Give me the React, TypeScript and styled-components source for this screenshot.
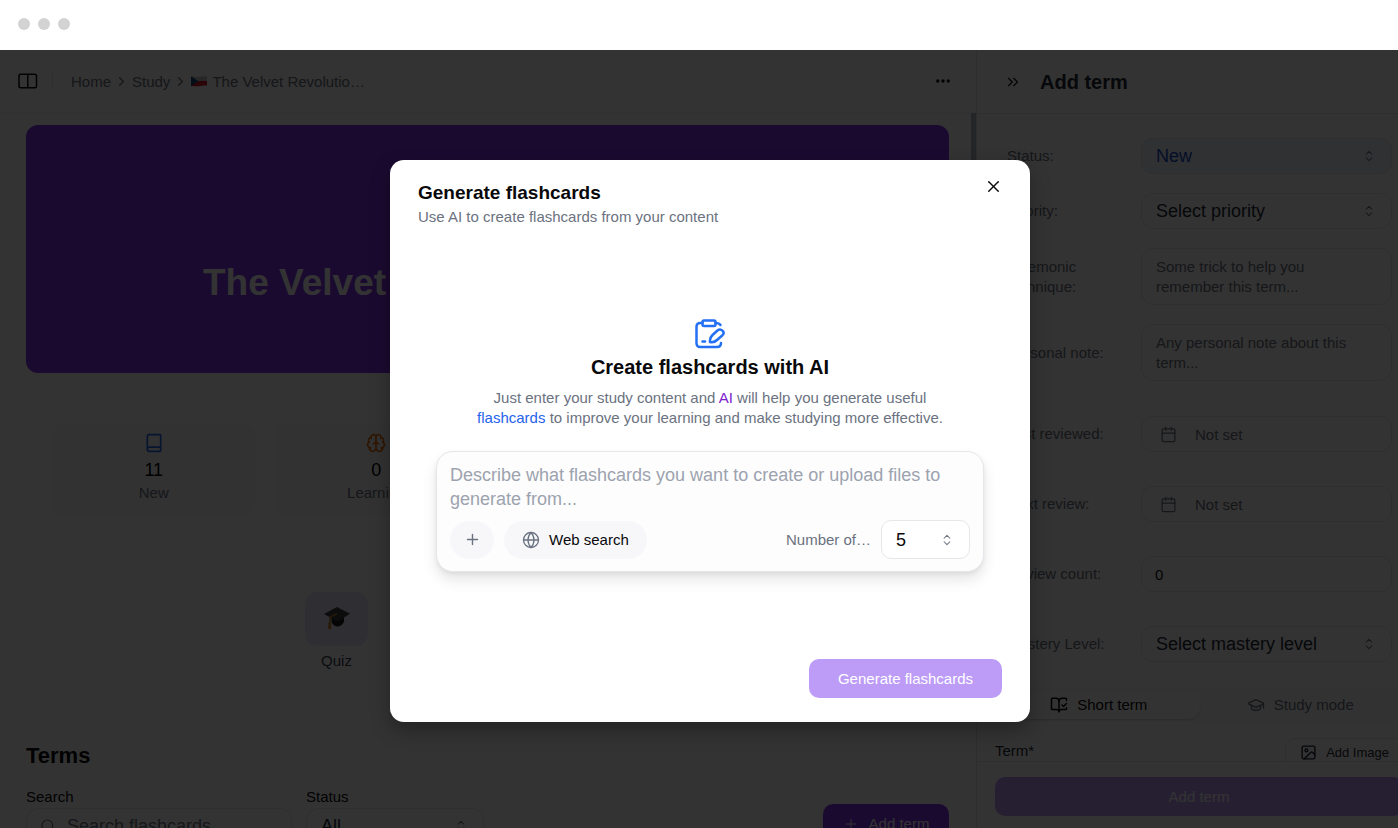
import React from "react";
import styled, { createGlobalStyle, css } from "styled-components";
import {
  Book,
  BookOpenCheck,
  Brain,
  Calendar,
  ChevronRight,
  ChevronsRight,
  ChevronsUpDown,
  Ellipsis,
  Globe,
  GraduationCap,
  Image as ImageIcon,
  Plus,
  Search,
  X,
} from "lucide-react";

const GlobalStyle = createGlobalStyle`
  *, *::before, *::after { box-sizing: border-box; }
  body { margin: 0; background: #fff; }
  body, button, input, select, textarea {
    font-family: "Liberation Sans", Arial, Helvetica, sans-serif;
  }
  h1, h2, h3, p { margin: 0; }
  button { cursor: pointer; }
`;

const ink = "#0a0a0c";
const muted = "#6b7280";
const line = "#e5e7eb";
const violet = "#8534ee";

const Page = styled.div`
  height: 100vh;
  display: flex;
  flex-direction: column;
  overflow: hidden;
`;

const WindowBar = styled.header`
  flex: none;
  height: 50px;
  padding: 0 18px 2px;
  display: flex;
  align-items: center;
  gap: 8px;
  background: #fff;
`;

const WindowDot = styled.span`
  width: 12px;
  height: 12px;
  border-radius: 50%;
  background: #d3d3d3;
`;

/* The shell runs a little past the window's right edge, where it is clipped. */
const Shell = styled.div`
  position: relative;
  flex: 1;
  min-height: 0;
  width: calc(100% + 25px);
  display: flex;
  overflow: hidden;
`;

const Main = styled.main`
  flex: 1;
  min-width: 0;
  display: flex;
  flex-direction: column;
  overflow: hidden;
`;

const TopBar = styled.div`
  flex: none;
  height: 63px;
  padding: 0 24px 0 18px;
  display: flex;
  align-items: center;
  border-bottom: 1px solid #f3f4f6;
`;

const IconButton = styled.button`
  display: inline-flex;
  align-items: center;
  justify-content: center;
  padding: 0;
  border: 0;
  background: none;
  color: ${ink};
`;

const Separator = styled.span`
  width: 1px;
  height: 16px;
  margin: 0 18px 0 14px;
  background: ${line};
`;

const Crumbs = styled.nav`
  display: flex;
  align-items: center;
  gap: 3px;
  flex: 1;
  font-size: 15px;
  color: ${muted};
`;

const Crumb = styled.a`
  display: inline-flex;
  align-items: center;
  gap: 5px;
  color: inherit;
  text-decoration: none;
`;

const Content = styled.div`
  position: relative;
  flex: 1;
  min-height: 0;
  padding: 12px 27px 0 26px;
  overflow: hidden;
`;

const ScrollThumb = styled.div`
  position: absolute;
  top: 0;
  right: 0;
  width: 5px;
  height: 240px;
  background: #b4b8bd;
`;

const Hero = styled.section`
  height: 248px;
  padding: 68px 177px 0;
  border-radius: 12px;
  background: ${violet};
  overflow: hidden;
  display: flex;
  align-items: center;
`;

const HeroTitle = styled.h1`
  flex: none;
  color: #fff;
  font-size: 37px;
  line-height: 44px;
  white-space: nowrap;
`;

const Stats = styled.section`
  display: grid;
  grid-template-columns: repeat(4, 1fr);
  gap: 19px;
  margin-top: 50px;
  padding: 0 26px;
`;

const Stat = styled.div`
  height: 92px;
  display: flex;
  flex-direction: column;
  align-items: center;
  padding-top: 10px;
  border-radius: 12px;
  background: #fafafb;
`;

const StatValue = styled.div`
  margin-top: 5px;
  font-size: 18px;
  line-height: 24px;
  color: #000;
`;

const StatLabel = styled.div`
  font-size: 15px;
  line-height: 22px;
  color: ${muted};
`;

const Modes = styled.section`
  display: flex;
  margin-top: 77px;
  padding-left: 279px;
`;

const Mode = styled.button`
  display: flex;
  flex-direction: column;
  align-items: center;
  gap: 6px;
  padding: 0;
  border: 0;
  background: none;
  color: #374151;
  font-size: 15px;
  line-height: 18px;
`;

const ModeTile = styled.span`
  width: 63px;
  height: 54px;
  display: flex;
  align-items: center;
  justify-content: center;
  border-radius: 12px;
  background: #ebe7f9;
`;

const TermsTitle = styled.h2`
  margin-top: 73px;
  font-size: 22px;
  line-height: 26px;
  color: ${ink};
`;

const Filters = styled.div`
  display: flex;
  align-items: flex-start;
  gap: 14px;
  margin-top: 19px;
`;

const Filter = styled.label<{ $width: number }>`
  width: ${(p) => p.$width}px;
  display: flex;
  flex-direction: column;
  gap: 2px;
  font-size: 15px;
  line-height: 18px;
  color: ${ink};
`;

const FieldBox = styled.span<{ $tint?: boolean }>`
  position: relative;
  display: flex;
  align-items: center;
  width: 100%;
  min-height: 36px;
  border: 1px solid ${line};
  border-radius: 12px;
  background: ${(p) => (p.$tint ? "#eff6ff" : "#fff")};
`;

const controlReset = css`
  width: 100%;
  margin: 0;
  border: 0;
  outline: 0;
  background: transparent;
  appearance: none;
`;

const TextInput = styled.input<{ $small?: boolean; $indent?: number }>`
  ${controlReset}
  height: 34px;
  padding: 0 14px 0 ${(p) => p.$indent ?? 13}px;
  font-size: ${(p) => (p.$small ? 15 : 18)}px;
  color: ${ink};
  &::placeholder {
    color: ${muted};
    opacity: 1;
  }
`;

const SelectInput = styled.select<{ $blue?: boolean }>`
  ${controlReset}
  height: 34px;
  padding: 0 32px 0 14px;
  font-size: 18px;
  color: ${(p) => (p.$blue ? "#1d48c8" : "#1f2937")};
`;

const BoxIcon = styled.span<{ $side: "left" | "right"; $inset: number }>`
  position: absolute;
  ${(p) => p.$side}: ${(p) => p.$inset}px;
  display: flex;
  color: ${muted};
  pointer-events: none;
`;

const NoteInput = styled.textarea`
  ${controlReset}
  display: block;
  height: 55px;
  padding: 8px 24px 7px 14px;
  resize: none;
  overflow: hidden;
  font-size: 15px;
  line-height: 20px;
  &::placeholder {
    color: ${muted};
    opacity: 1;
  }
`;

const FilterAction = styled.div`
  flex: 1;
  display: flex;
  justify-content: flex-end;
  padding-top: 16px;
`;

const AddTermButton = styled.button`
  display: flex;
  align-items: center;
  justify-content: center;
  gap: 10px;
  width: 126px;
  height: 39px;
  padding: 0;
  border: 0;
  border-radius: 10px;
  background: ${violet};
  color: #fff;
  font-size: 15px;
`;

const Aside = styled.aside`
  flex: 0 0 447px;
  display: flex;
  flex-direction: column;
  border-left: 1px solid ${line};
`;

const AsideHeader = styled.div`
  flex: none;
  height: 64px;
  display: flex;
  align-items: center;
  gap: 18px;
  padding-left: 27px;
  border-bottom: 1px solid ${line};
`;

const AsideTitle = styled.h2`
  font-size: 20px;
  line-height: 24px;
  color: #1f2937;
`;

const AsideBody = styled.div`
  flex: 1;
  min-height: 0;
  padding-top: 24px;
  overflow: hidden;
`;

const Fields = styled.div<{ $gap: number }>`
  display: flex;
  flex-direction: column;
  gap: ${(p) => p.$gap}px;
  padding: 0 31px 0 30px;
  & + & {
    margin-top: 35px;
  }
`;

const Field = styled.label`
  display: grid;
  grid-template-columns: 134px 1fr;
  align-items: center;
  font-size: 15px;
  line-height: 20px;
  color: ${muted};
`;

const FieldName = styled.span`
  padding-right: 16px;
`;

const Tabs = styled.div`
  display: grid;
  grid-template-columns: 1fr 1fr;
  margin: 25px 19px 0 18px;
  padding: 3px;
  border-radius: 12px;
  background: #f9fafb;
`;

const Tab = styled.button<{ $active?: boolean }>`
  height: 29px;
  display: flex;
  align-items: center;
  justify-content: center;
  gap: 9px;
  padding: 0;
  border: 0;
  border-radius: 12px;
  background: ${(p) => (p.$active ? "#fff" : "transparent")};
  box-shadow: ${(p) => (p.$active ? "0 1px 2px rgba(0, 0, 0, 0.16)" : "none")};
  color: ${(p) => (p.$active ? ink : muted)};
  font-size: 15px;
`;

const TermRow = styled.div`
  display: flex;
  align-items: flex-start;
  justify-content: space-between;
  margin-top: 16px;
  padding: 0 19px 0 18px;
  font-size: 15px;
  line-height: 26px;
  color: #1f2937;
`;

const AddImageButton = styled.button`
  height: 31px;
  display: flex;
  align-items: center;
  gap: 9px;
  padding: 0 14px 3px;
  border: 1px solid ${line};
  border-radius: 10px;
  background: #fff;
  color: #1f2937;
  font-size: 13px;
`;

const AsideFooter = styled.div`
  flex: none;
  padding: 15px 20px 12px 18px;
  border-top: 1px solid ${line};
`;

const primaryFaded = css`
  height: 39px;
  border: 0;
  border-radius: 10px;
  background: #bd9cf7;
  color: #fff;
  font-size: 15px;
`;

const SubmitTerm = styled.button`
  ${primaryFaded}
  width: 100%;
`;

const Overlay = styled.div`
  position: absolute;
  inset: 0;
  display: grid;
  place-items: center;
  padding: 4px 3px 0 0;
  background: rgba(0, 0, 0, 0.8);
`;

const Dialog = styled.section`
  position: relative;
  width: 640px;
  padding: 22px 28px 24px;
  border-radius: 14px;
  background: #fff;
  box-shadow: 0 8px 20px rgba(0, 0, 0, 0.3);
`;

const DialogTitle = styled.h2`
  font-size: 19px;
  line-height: 22px;
  color: #09090b;
`;

const DialogSubtitle = styled.p`
  margin-top: 3px;
  font-size: 15px;
  line-height: 20px;
  color: ${muted};
`;

const CloseButton = styled(IconButton)`
  position: absolute;
  top: 16px;
  right: 27px;
  width: 20px;
  height: 20px;
`;

const Intro = styled.div`
  display: flex;
  flex-direction: column;
  align-items: center;
  margin-top: 92px;
`;

const IntroTitle = styled.h3`
  margin-top: 6px;
  font-size: 20px;
  line-height: 24px;
  color: #09090b;
`;

const IntroText = styled.p`
  max-width: 500px;
  margin-top: 9px;
  font-size: 15px;
  line-height: 20px;
  text-align: center;
  color: ${muted};
`;

const Accent = styled.span<{ $tone: "violet" | "blue" }>`
  color: ${(p) => (p.$tone === "violet" ? "#7c22ce" : "#2563eb")};
`;

const Prompt = styled.div`
  margin: 23px 18px 0;
  padding: 11px 13px 12px;
  border: 1px solid ${line};
  border-radius: 17px;
  background: #fdfdfd;
  box-shadow: 0 8px 14px rgba(0, 0, 0, 0.1), 0 2px 4px rgba(0, 0, 0, 0.06);
`;

const PromptInput = styled.textarea`
  ${controlReset}
  display: block;
  height: 48px;
  padding: 0;
  resize: none;
  overflow: hidden;
  font-size: 18px;
  line-height: 24px;
  &::placeholder {
    color: #9ca3af;
    opacity: 1;
  }
`;

const PromptTools = styled.div`
  display: flex;
  align-items: center;
  margin-top: 9px;
`;

const Pill = styled.button<{ $round?: boolean }>`
  height: 38px;
  width: ${(p) => (p.$round ? "44px" : "auto")};
  display: flex;
  align-items: center;
  justify-content: center;
  gap: 9px;
  margin-right: 10px;
  padding: 0 ${(p) => (p.$round ? 0 : 18)}px;
  border: 0;
  border-radius: 20px;
  background: #f7f7fa;
  color: #09090b;
  font-size: 15px;
  svg {
    color: ${muted};
  }
`;

const CountLabel = styled.label`
  margin: 0 10px 0 auto;
  font-size: 15px;
  color: ${muted};
`;

const CountBox = styled(FieldBox)`
  width: 89px;
  height: 39px;
  border-radius: 10px;
`;

const CountSelect = styled(SelectInput)`
  color: #09090b;
`;

const DialogFooter = styled.div`
  display: flex;
  justify-content: flex-end;
  margin-top: 87px;
`;

const GenerateButton = styled.button`
  ${primaryFaded}
  width: 193px;
`;

const SidebarIcon = () => (
  <svg
    width="20"
    height="16"
    viewBox="0 0 20 16"
    fill="none"
    stroke="currentColor"
    strokeWidth="1.5"
    aria-hidden="true"
  >
    <rect x="1" y="1.25" width="17.500" height="13.500" rx="1.750" />
    <path d="M9.750 1.250v13.500" />
  </svg>
);

const CzechFlag = () => (
  <svg width="16" height="12" viewBox="0 0 16 12" aria-hidden="true">
    <path d="M0 1.5C3 0.5 5 2.4 8 2s5-1 8-0.6V6H0Z" fill="#c4c4c4" />
    <path d="M0 6h16v4.6c-3-.4-5 .2-8 .6s-5-.6-8-.2Z" fill="#d21422" />
    <path d="M0 1.5 7.5 6.3 0 11Z" fill="#11457e" />
  </svg>
);

const CapIcon = () => (
  <svg width="28" height="24" viewBox="0 0 28 24" aria-hidden="true">
    <path d="M8.500 8v7c1 3 4 4.500 6.200 4.500S20 17.500 21 14.500V8Z" fill="#1c1c1c" />
    <path d="M14 0 1 7l13.500 7.500L27 6.800Z" fill="#3c3c3c" />
    <path d="M14 6.800 7 10v6" fill="none" stroke="#b87e2c" strokeWidth="1.500" />
    <path d="m5.800 15-1 7h3.600L8 15Z" fill="#c88a2c" />
  </svg>
);

const ClipboardPen = () => (
  <svg
    width="30"
    height="30"
    viewBox="0 0 30 30"
    fill="none"
    stroke="#2470f2"
    strokeWidth="2.500"
    strokeLinecap="round"
    strokeLinejoin="round"
    aria-hidden="true"
  >
    <rect x="7.500" y="1.500" width="13" height="5.500" rx="1.500" />
    <path d="M7.500 4H5c-2 0-3.500 1.500-3.500 3.500v17c0 2 1.500 3.500 3.500 3.500h17c2.500 0 4-1 4-4" />
    <path d="M20.500 4c2.500 0 4 .5 5 2" />
    <path d="M15 23c-.5-3 .5-5 2.500-7l5-4.500c1.500-1.200 3.500-1.200 5 .2 1.500 1.500 1.300 3.200 0 4.500L22 21c-2 2-4 2.500-7 2Z" />
    <path d="M7.500 22.500H10" />
  </svg>
);

const UpDown = () => (
  <BoxIcon $side="right" $inset={15}>
    <ChevronsUpDown size={14} strokeWidth={1.75} />
  </BoxIcon>
);

export default function App() {
  return (
    <Page>
      <GlobalStyle />
      <WindowBar>
        <WindowDot />
        <WindowDot />
        <WindowDot />
      </WindowBar>
      <Shell>
        <Main>
          <TopBar>
            <IconButton aria-label="Toggle sidebar">
              <SidebarIcon />
            </IconButton>
            <Separator />
            <Crumbs>
              <Crumb href="#home">Home</Crumb>
              <ChevronRight size={15} />
              <Crumb href="#study">Study</Crumb>
              <ChevronRight size={15} />
              <Crumb href="#set">
                <CzechFlag />
                The Velvet Revolutio…
              </Crumb>
            </Crumbs>
            <IconButton aria-label="More">
              <Ellipsis size={18} strokeWidth={2.5} />
            </IconButton>
          </TopBar>
          <Content>
            <ScrollThumb />
            <Hero>
              <HeroTitle>The Velvet Revolution</HeroTitle>
            </Hero>
            <Stats>
              <Stat>
                <Book size={20} color="#2563eb" />
                <StatValue>11</StatValue>
                <StatLabel>New</StatLabel>
              </Stat>
              <Stat>
                <Brain size={20} color="#ea700c" />
                <StatValue>0</StatValue>
                <StatLabel>Learning</StatLabel>
              </Stat>
            </Stats>
            <Modes>
              <Mode>
                <ModeTile>
                  <CapIcon />
                </ModeTile>
                Quiz
              </Mode>
            </Modes>
            <TermsTitle>Terms</TermsTitle>
            <Filters>
              <Filter $width={266}>
                Search
                <FieldBox>
                  <BoxIcon $side="left" $inset={13}>
                    <Search size={16} strokeWidth={1.75} />
                  </BoxIcon>
                  <TextInput $indent={40} placeholder="Search flashcards" />
                </FieldBox>
              </Filter>
              <Filter $width={178}>
                Status
                <FieldBox>
                  <SelectInput>
                    <option>All</option>
                  </SelectInput>
                  <UpDown />
                </FieldBox>
              </Filter>
              <FilterAction>
                <AddTermButton>
                  <Plus size={16} strokeWidth={1.5} />
                  Add term
                </AddTermButton>
              </FilterAction>
            </Filters>
          </Content>
        </Main>

        <Aside>
          <AsideHeader>
            <IconButton aria-label="Collapse panel">
              <ChevronsRight size={18} strokeWidth={1.5} />
            </IconButton>
            <AsideTitle>Add term</AsideTitle>
          </AsideHeader>
          <AsideBody>
            <Fields $gap={19}>
              <Field>
                <FieldName>Status:</FieldName>
                <FieldBox $tint>
                  <SelectInput $blue>
                    <option>New</option>
                  </SelectInput>
                  <UpDown />
                </FieldBox>
              </Field>
              <Field>
                <FieldName>Priority:</FieldName>
                <FieldBox>
                  <SelectInput>
                    <option>Select priority</option>
                  </SelectInput>
                  <UpDown />
                </FieldBox>
              </Field>
              <Field>
                <FieldName>Mnemonic technique:</FieldName>
                <FieldBox>
                  <NoteInput placeholder="Some trick to help you remember this term..." />
                </FieldBox>
              </Field>
              <Field>
                <FieldName>Personal note:</FieldName>
                <FieldBox>
                  <NoteInput placeholder="Any personal note about this term..." />
                </FieldBox>
              </Field>
            </Fields>
            <Fields $gap={34}>
              <Field>
                <FieldName>Last reviewed:</FieldName>
                <FieldBox>
                  <BoxIcon $side="left" $inset={18}>
                    <Calendar size={17} strokeWidth={1.75} />
                  </BoxIcon>
                  <TextInput $small $indent={53} placeholder="Not set" />
                </FieldBox>
              </Field>
              <Field>
                <FieldName>Next review:</FieldName>
                <FieldBox>
                  <BoxIcon $side="left" $inset={18}>
                    <Calendar size={17} strokeWidth={1.75} />
                  </BoxIcon>
                  <TextInput $small $indent={53} placeholder="Not set" />
                </FieldBox>
              </Field>
              <Field>
                <FieldName>Review count:</FieldName>
                <FieldBox>
                  <TextInput $small defaultValue="0" />
                </FieldBox>
              </Field>
              <Field>
                <FieldName>Mastery Level:</FieldName>
                <FieldBox>
                  <SelectInput>
                    <option>Select mastery level</option>
                  </SelectInput>
                  <UpDown />
                </FieldBox>
              </Field>
            </Fields>
            <Tabs>
              <Tab $active>
                <BookOpenCheck size={18} strokeWidth={2} />
                Short term
              </Tab>
              <Tab>
                <GraduationCap size={18} strokeWidth={1.75} />
                Study mode
              </Tab>
            </Tabs>
            <TermRow>
              Term*
              <AddImageButton>
                <ImageIcon size={17} strokeWidth={2} />
                Add Image
              </AddImageButton>
            </TermRow>
          </AsideBody>
          <AsideFooter>
            <SubmitTerm>Add term</SubmitTerm>
          </AsideFooter>
        </Aside>

        <Overlay>
          <Dialog role="dialog" aria-labelledby="dialog-title">
            <DialogTitle id="dialog-title">Generate flashcards</DialogTitle>
            <DialogSubtitle>
              Use AI to create flashcards from your content
            </DialogSubtitle>
            <CloseButton aria-label="Close">
              <X size={19} strokeWidth={1.75} />
            </CloseButton>
            <Intro>
              <ClipboardPen />
              <IntroTitle>Create flashcards with AI</IntroTitle>
              <IntroText>
                Just enter your study content and{" "}
                <Accent $tone="violet">AI</Accent> will help you generate useful{" "}
                <Accent $tone="blue">flashcards</Accent> to improve your
                learning and make studying more effective.
              </IntroText>
            </Intro>
            <Prompt>
              <PromptInput
                aria-label="Flashcard description"
                placeholder="Describe what flashcards you want to create or upload files to generate from..."
              />
              <PromptTools>
                <Pill $round aria-label="Attach files">
                  <Plus size={17} strokeWidth={2} />
                </Pill>
                <Pill>
                  <Globe size={18} strokeWidth={1.75} />
                  Web search
                </Pill>
                <CountLabel htmlFor="card-count">Number of…</CountLabel>
                <CountBox>
                  <CountSelect id="card-count">
                    <option>5</option>
                  </CountSelect>
                  <UpDown />
                </CountBox>
              </PromptTools>
            </Prompt>
            <DialogFooter>
              <GenerateButton>Generate flashcards</GenerateButton>
            </DialogFooter>
          </Dialog>
        </Overlay>
      </Shell>
    </Page>
  );
}
